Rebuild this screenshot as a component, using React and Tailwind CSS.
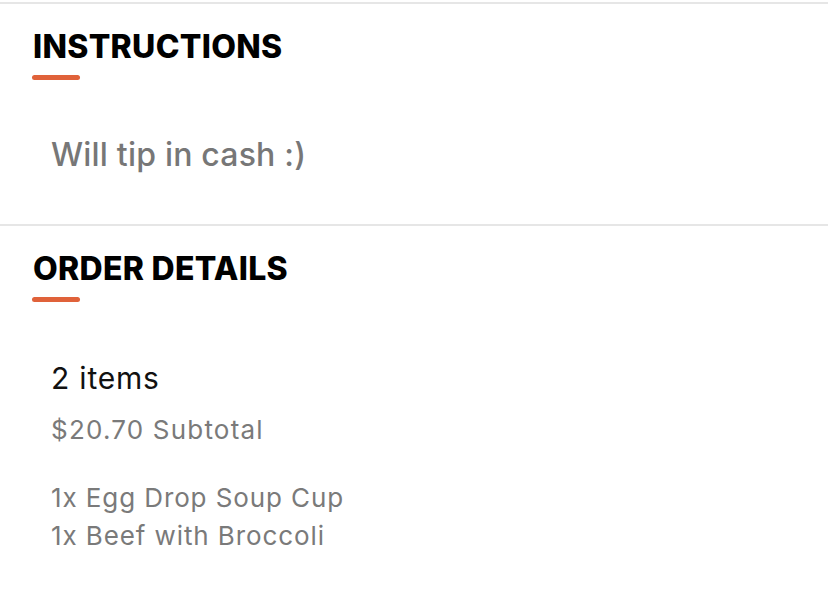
import React from "react";

const Section = ({ title, children, className = "" }) => (
  <div className={"border-t-2 border-[#e6e6e6] pt-[27px] " + className}>
    <h2 className="px-[33px] text-[32px] leading-[32px] font-extrabold tracking-[0.3px] text-black">
      {title}
    </h2>
    <div className="ml-[32px] mt-[12px] h-[5px] w-[48px] rounded-full bg-[#e0623a]" />
    {children}
  </div>
);

export default function App() {
  return (
    <div
      className="w-[828px] h-[606px] bg-white pt-[2px] overflow-hidden"
      style={{ fontFamily: "Inter, 'Noto Sans', sans-serif" }}
    >
      <Section title="INSTRUCTIONS" className="pb-[50px]">
        <p className="mt-[56px] px-[51px] text-[32px] leading-[38px] font-medium tracking-[0.2px] text-[#777]">
          Will tip in cash :)
        </p>
      </Section>
      <Section title="ORDER DETAILS">
        <div className="mt-[58px] px-[51px]">
          <p className="text-[30px] leading-[36px] tracking-[0.8px] text-[#111]">2 items</p>
          <p className="mt-[18px] text-[26px] leading-[32px] tracking-[1.2px] text-[#7a7a7a]">
            $20.70 Subtotal
          </p>
          <div className="mt-[33px] text-[26px] leading-[38px] tracking-[0.9px] text-[#7a7a7a]">
            <p>1x Egg Drop Soup Cup</p>
            <p>1x Beef with Broccoli</p>
          </div>
        </div>
      </Section>
    </div>
  );
}
